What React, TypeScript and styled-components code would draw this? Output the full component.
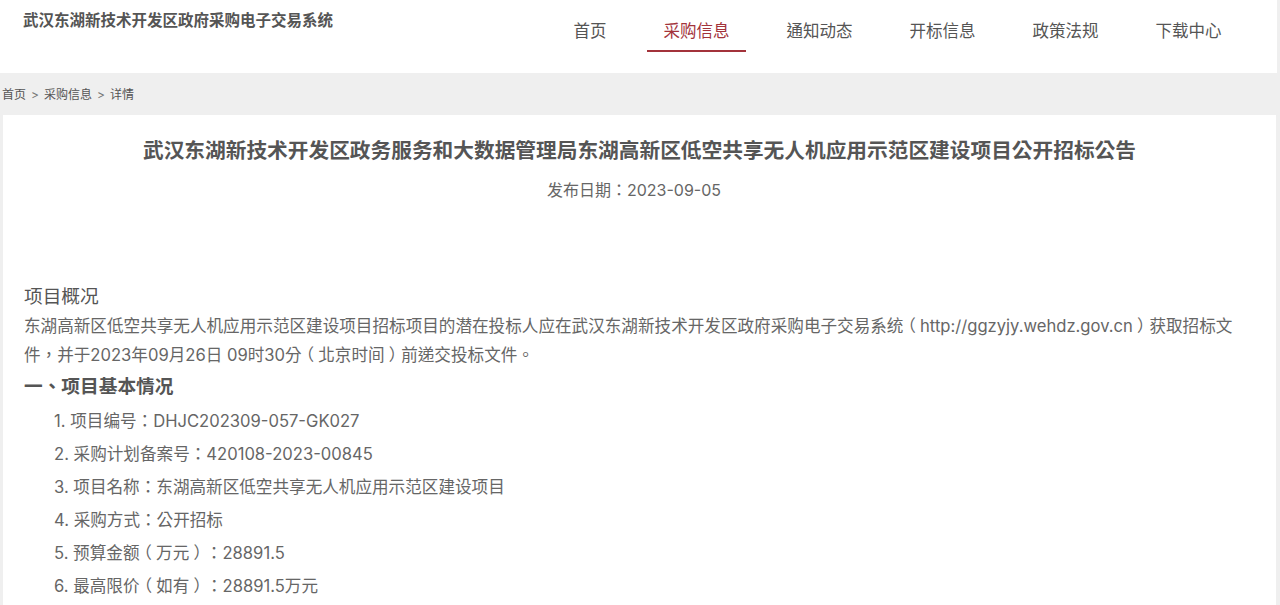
import React from "react";
import styled, { createGlobalStyle } from "styled-components";

const GlobalStyle = createGlobalStyle`
  body {
    margin: 0;
    background: #efefef;
    font-family: Inter, "Noto Sans CJK TC", "Noto Sans CJK SC", sans-serif;
    color: #555;
  }
`;

const Header = styled.div`
  width: 1277px;
  height: 73px;
  background: #fff;
  display: flex;
  justify-content: space-between;
  box-sizing: border-box;
  padding-right: 27px;
`;

const SiteName = styled.div`
  padding: 10px 0 0 23px;
  font-size: 15.5px;
  line-height: 22px;
  font-weight: bold;
  color: #555;
`;

const Nav = styled.ul`
  display: flex;
  list-style: none;
  margin: 0;
  padding: 0;
  height: 73px;
`;

const NavItem = styled.li<{ $active?: boolean }>`
  margin: 0 12px;
  padding: 20px 16.5px 0;
  height: 30px;
  font-size: 16.5px;
  line-height: 22px;
  color: ${(p) => (p.$active ? "#a3333b" : "#555")};
  border-bottom: 2px solid ${(p) => (p.$active ? "#a3333b" : "transparent")};
`;

const Crumbs = styled.div`
  height: 42px;
  line-height: 44px;
  padding-left: 2px;
  font-size: 12px;
  color: #555;
`;

const Sep = styled.span`
  margin: 0 5px;
  color: #777;
`;

// full-width bracket drawn centred in its em box
const Bracket = styled.span`
  display: inline-block;
  width: 1em;
  text-align: center;
  font-feature-settings: "halt";
`;

const Content = styled.div`
  margin: 0 4px 0 3px;
  background: #fff;
  padding: 21px 21px 40px 21px;
  min-height: 600px;
`;

const Title = styled.h1`
  margin: 0;
  text-align: center;
  font-size: 20.7px;
  line-height: 30px;
  font-weight: bold;
  color: #555;
`;

const PubDate = styled.div`
  margin-top: 12px;
  padding-right: 11px;
  text-align: center;
  font-size: 16px;
  line-height: 24px;
  color: #666;
`;

const SectionHead = styled.h2<{ $bold?: boolean }>`
  margin: ${(p) => (p.$bold ? "2px 0 0" : "0")};
  font-size: 18.7px;
  line-height: ${(p) => (p.$bold ? "30px" : "26px")};
  font-weight: ${(p) => (p.$bold ? "bold" : "normal")};
  color: #555;
`;

const Overview = styled.div`
  margin-top: 82px;
`;

const Para = styled.p`
  margin: 2px 0 0;
  font-size: 16.6px;
  line-height: 29px;
  color: #666;
  padding-right: 14px;
`;

const List = styled.ol`
  margin: 3px 0 0;
  padding: 0 0 0 30px;
  list-style: none;
`;

const ListItem = styled.li`
  font-size: 16.6px;
  line-height: 33px;
  color: #666;
`;

const navs = ["首页", "采购信息", "通知动态", "开标信息", "政策法规", "下载中心"];

const items = [
  "项目编号：DHJC202309-057-GK027",
  "采购计划备案号：420108-2023-00845",
  "项目名称：东湖高新区低空共享无人机应用示范区建设项目",
  "采购方式：公开招标",
  "预算金额（万元）：28891.5",
  "最高限价（如有）：28891.5万元",
];

function withBrackets(text: string) {
  return text.split(/([（）])/).map((part, i) =>
    part === "（" || part === "）" ? <Bracket key={i}>{part}</Bracket> : part
  );
}

export default function App() {
  return (
    <>
      <GlobalStyle />
      <Header>
        <SiteName>武汉东湖新技术开发区政府采购电子交易系统</SiteName>
        <Nav>
          {navs.map((n) => (
            <NavItem key={n} $active={n === "采购信息"}>
              {n}
            </NavItem>
          ))}
        </Nav>
      </Header>
      <Crumbs>
        首页<Sep>&gt;</Sep>采购信息<Sep>&gt;</Sep>详情
      </Crumbs>
      <Content>
        <Title>武汉东湖新技术开发区政务服务和大数据管理局东湖高新区低空共享无人机应用示范区建设项目公开招标公告</Title>
        <PubDate>发布日期：2023-09-05</PubDate>
        <Overview>
          <SectionHead>项目概况</SectionHead>
          <Para>
            {withBrackets(
              "东湖高新区低空共享无人机应用示范区建设项目招标项目的潜在投标人应在武汉东湖新技术开发区政府采购电子交易系统（http://ggzyjy.wehdz.gov.cn）获取招标文件，并于2023年09月26日 09时30分（北京时间）前递交投标文件。"
            )}
          </Para>
          <SectionHead $bold>一、项目基本情况</SectionHead>
          <List>
            {items.map((t, i) => (
              <ListItem key={i}>
                {i + 1}. {withBrackets(t)}
              </ListItem>
            ))}
          </List>
        </Overview>
      </Content>
    </>
  );
}
